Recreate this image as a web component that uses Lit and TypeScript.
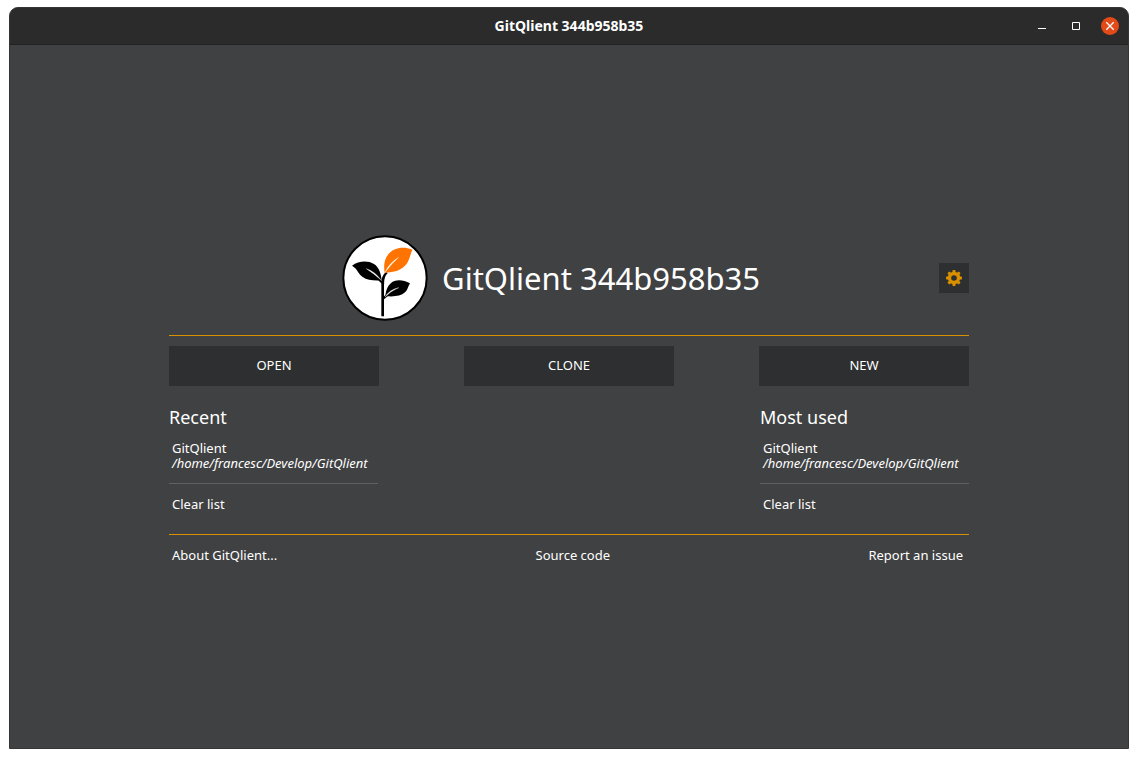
import { LitElement, html, css, svg } from "lit";
import { customElement, property } from "lit/decorators.js";

const VERSION = "GitQlient 344b958b35";

interface Repo {
  name: string;
  path: string;
}

const repos: Repo[] = [
  { name: "GitQlient", path: "/home/francesc/Develop/GitQlient" },
];

@customElement("title-bar")
class TitleBar extends LitElement {
  @property() heading = "";

  static styles = css`
    :host {
      display: grid;
      grid-template-columns: 1fr auto 1fr;
      align-items: center;
      height: 36px;
      padding: 0 9px;
      background: #2b2b2b;
      border-bottom: 1px solid #222222;
    }
    .heading {
      grid-column: 2;
      margin: 0;
      font-size: 14px;
      line-height: 20px;
      font-weight: 700;
      color: #ffffff;
    }
    .controls {
      display: flex;
      justify-content: flex-end;
      gap: 16px;
    }
    .control {
      display: block;
      width: 18px;
      height: 18px;
      padding: 0;
      border: 0;
      border-radius: 50%;
      background: none;
    }
    .close {
      background: #e24a18;
    }
    .glyph {
      display: block;
      fill: none;
      stroke: #ffffff;
    }
  `;

  render() {
    return html`
      <h2 class="heading">${this.heading}</h2>
      <div class="controls">
        <button class="control" aria-label="Minimize">
          <svg class="glyph" width="18" height="18" viewBox="0 0 18 18"><path d="M5 11.5h8" /></svg>
        </button>
        <button class="control" aria-label="Maximize">
          <svg class="glyph" width="18" height="18" viewBox="0 0 18 18"><path d="M5.500 5.500h7v7h-7z" /></svg>
        </button>
        <button class="control close" aria-label="Close">
          <svg class="glyph" width="18" height="18" viewBox="0 0 18 18">
            <path stroke-width="1.3" d="M5.300 5.300l7.400 7.400M12.700 5.300l-7.400 7.400" />
          </svg>
        </button>
      </div>
    `;
  }
}

@customElement("repo-list")
class RepoList extends LitElement {
  @property() heading = "";
  @property({ attribute: false }) items: Repo[] = [];

  static styles = css`
    :host {
      display: block;
      width: 209px;
    }
    .heading {
      margin: 0 0 12px;
      font-size: 18px;
      line-height: 24px;
      font-weight: 400;
    }
    .list {
      margin: 0;
      padding: 0 0 12px;
      list-style: none;
      border-bottom: 1px solid #606162;
    }
    .entry,
    .clear {
      display: block;
      padding: 0 3px;
      border: 0;
      background: none;
      color: inherit;
      font: inherit;
      line-height: 15px;
      text-align: left;
      white-space: nowrap;
    }
    .name,
    .path {
      display: block;
    }
    .path {
      font-style: italic;
    }
    .clear {
      margin-top: 13px;
    }
  `;

  render() {
    return html`
      <h2 class="heading">${this.heading}</h2>
      <ul class="list">
        ${this.items.map(
          (r) => html`<li>
            <button class="entry"><span class="name">${r.name}</span><span class="path">${r.path}</span></button>
          </li>`
        )}
      </ul>
      <button class="clear">Clear list</button>
    `;
  }
}

const gearTeeth = [0, 45, 90, 135, 180, 225, 270, 315];

@customElement("app-root")
class AppRoot extends LitElement {
  static styles = css`
    :host {
      display: flex;
      box-sizing: border-box;
      min-height: 100vh;
      padding: 7px 9px 9px;
      background: #ffffff;
      color: #ffffff;
      font-family: "Noto Sans", "Open Sans", sans-serif;
      font-size: 13px;
      line-height: 15px;
    }
    .window {
      flex: 1;
      display: flex;
      flex-direction: column;
      overflow: hidden;
      border: 1px solid #353535;
      border-radius: 9px 9px 0 0;
      background: #404142;
    }
    .body {
      flex: 1;
      display: flex;
      align-items: center;
      justify-content: center;
      padding: 12px 20px 0;
    }
    .panel {
      width: 100%;
      max-width: 800px;
    }
    .brand {
      display: flex;
      align-items: center;
      gap: 6px;
      padding-bottom: 14px;
      border-bottom: 1px solid #d89000;
    }
    .identity {
      flex: 1;
      display: flex;
      align-items: center;
      justify-content: center;
      gap: 14px;
    }
    .logo {
      width: 86px;
      height: 86px;
    }
    .title {
      margin: 0;
      font-size: 31px;
      line-height: 40px;
      font-weight: 400;
    }
    .settings {
      display: grid;
      place-items: center;
      width: 30px;
      height: 30px;
      padding: 0;
      border: 0;
      background: #2e2f30;
    }
    .gear {
      display: block;
    }
    .row {
      display: flex;
      justify-content: space-between;
    }
    .actions {
      margin: 10px 0 19px;
    }
    .action {
      width: 210px;
      height: 40px;
      border: 0;
      background: #2e2f30;
      color: inherit;
      font: inherit;
    }
    .links {
      margin-top: 22px;
      padding: 13px 6px 8px 3px;
      border-top: 1px solid #d89000;
    }
    .link {
      color: inherit;
      text-decoration: none;
    }
  `;

  render() {
    return html`
      <div class="window">
        <title-bar .heading=${VERSION}></title-bar>
        <main class="body">
          <div class="panel">
            <header class="brand">
              <div class="identity">
                <svg class="logo" viewBox="32 29 258 258" aria-hidden="true">
                  <circle cx="161" cy="158" r="125" fill="#fff" stroke="#000" stroke-width="6" />
                  <path d="M150 273V176Q150 150 164 140L169 144Q158 153 158 176V213L166 207L170 212L158 222V273Z" />
                  <path d="M62 121C82 106 110 105 128 116C143 126 149 144 151 165C130 167 108 165 94 155C81 146 78 130 62 121Z" />
                  <path d="M143 163L157 177" stroke="#000" stroke-width="6" />
                  <path d="M105 130Q132 139 149 164Q128 145 105 130Z" fill="#fff" stroke="#fff" stroke-width="1" />
                  <path d="M243 73C215 62 187 67 171 87C157 105 157 124 160 142C188 142 211 135 225 117C236 102 237 85 243 73Z" fill="#ff7300" />
                  <path d="M202 96Q174 113 161 141Q180 116 202 96Z" fill="#fff" stroke="#fff" stroke-width="1" />
                  <path d="M236 174C213 162 191 162 177 175C166 185 164 198 162 212C184 215 208 213 221 201C230 193 230 183 236 174Z" />
                  <path d="M202 187Q174 193 161 215Q178 197 202 187Z" fill="#fff" stroke="#fff" stroke-width="1" />
                </svg>
                <h1 class="title">${VERSION}</h1>
              </div>
              <button class="settings" aria-label="Settings">
                <svg class="gear" width="16" height="16" viewBox="0 0 16 16" aria-hidden="true">
                  <circle cx="8" cy="8" r="4.500" fill="none" stroke="#d89000" stroke-width="3.400" />
                  ${gearTeeth.map(
                    (a) => svg`<path d="M6.300 2.500L6.700 0h2.600l.4 2.500z" fill="#d89000" transform="rotate(${a} 8 8)" />`
                  )}
                </svg>
              </button>
            </header>
            <div class="row actions">
              <button class="action">OPEN</button>
              <button class="action">CLONE</button>
              <button class="action">NEW</button>
            </div>
            <div class="row">
              <repo-list heading="Recent" .items=${repos}></repo-list>
              <repo-list heading="Most used" .items=${repos}></repo-list>
            </div>
            <footer>
              <nav class="row links">
                <a class="link" href="#about">About GitQlient...</a>
                <a class="link" href="#source">Source code</a>
                <a class="link" href="#issues">Report an issue</a>
              </nav>
            </footer>
          </div>
        </main>
      </div>
    `;
  }
}
